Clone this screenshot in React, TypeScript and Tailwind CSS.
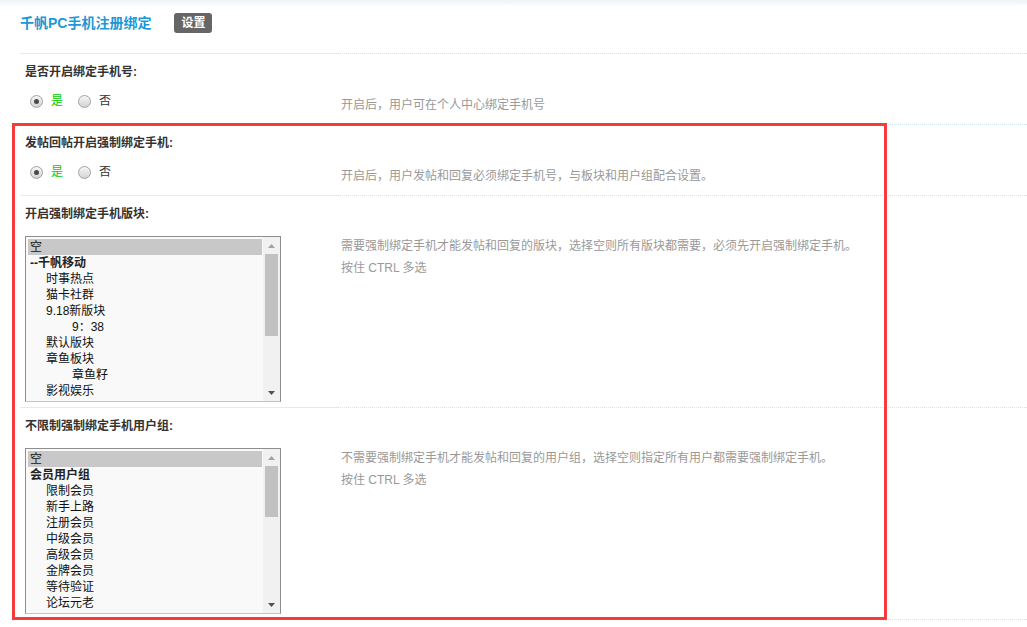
import React from 'react';

interface Opt {
  text: string;
  indent?: 0 | 1 | 2;
  bold?: boolean;
  selected?: boolean;
}

const forumOptions: Opt[] = [
  { text: '空', selected: true },
  { text: '--千帆移动', bold: true },
  { text: '时事热点', indent: 1 },
  { text: '猫卡社群', indent: 1 },
  { text: '9.18新版块', indent: 1 },
  { text: '9：38', indent: 2 },
  { text: '默认版块', indent: 1 },
  { text: '章鱼板块', indent: 1 },
  { text: '章鱼籽', indent: 2 },
  { text: '影视娱乐', indent: 1 },
];

const groupOptions: Opt[] = [
  { text: '空', selected: true },
  { text: '会员用户组', bold: true },
  { text: '限制会员', indent: 1 },
  { text: '新手上路', indent: 1 },
  { text: '注册会员', indent: 1 },
  { text: '中级会员', indent: 1 },
  { text: '高级会员', indent: 1 },
  { text: '金牌会员', indent: 1 },
  { text: '等待验证', indent: 1 },
  { text: '论坛元老', indent: 1 },
];

// row separator: solid under the form cell, dotted under the tips cell
function Line() {
  return (
    <div className="flex h-px">
      <div className="w-[317px] bg-[#e2eaf3]" />
      <div className="flex-1 border-t border-dotted border-[#cfe3f3]" />
    </div>
  );
}

function Header({ label }: { label: string }) {
  return (
    <div className="h-[30px] pl-[5px] pt-[11px] text-[12px] leading-[14px] font-bold text-[#333]">
      {label}
    </div>
  );
}

function Radio({ checked }: { checked?: boolean }) {
  return (
    <span className="flex h-[13px] w-[13px] items-center justify-center rounded-full border border-[#a2a2a2] bg-gradient-to-b from-[#f6f6f6] to-[#d4d4d4]">
      {checked && <span className="h-[5px] w-[5px] rounded-full bg-[#4a4a4a]" />}
    </span>
  );
}

function RadioRow({ tips }: { tips: string }) {
  return (
    <div className="flex h-[40px]">
      <div className="w-[317px] pl-[10px] pt-[10px]">
        <div className="flex h-[14px] items-center text-[12px] leading-[14px]">
          <Radio checked />
          <span className="ml-[8px] text-[#00cc00]">是</span>
          <span className="ml-[15px]">
            <Radio />
          </span>
          <span className="ml-[8px] text-[#333]">否</span>
        </div>
      </div>
      <div className="pl-[4px] pt-[13px] text-[12px] leading-[16px] text-[#999]">{tips}</div>
    </div>
  );
}

function ListBox({ options, thumb }: { options: Opt[]; thumb: number }) {
  return (
    <div className="flex h-[166px] w-[256px] border border-[#8e8e8e] border-b-[#c4c4c4] bg-[#f9f9f9]">
      <div className="flex-1 overflow-hidden pl-[2px] pr-[1px] pt-[2px]">
        {options.map((o, i) => (
          <div
            key={i}
            className={`h-[16px] whitespace-nowrap pl-[2px] text-[12px] leading-[16px] ${
              o.selected ? 'bg-[#c8c8c8] text-[#111]' : 'text-[#111]'
            } ${o.bold ? 'font-bold text-[#222]' : ''} ${
              o.indent === 1 ? 'pl-[18px]' : o.indent === 2 ? 'pl-[44px]' : ''
            }`}
          >
            {o.text}
          </div>
        ))}
      </div>
      <div className="flex w-[17px] flex-col bg-[#f1f1f1]">
        <div className="flex h-[17px] items-center justify-center">
          <svg width="7" height="4" viewBox="0 0 7 4">
            <path d="M0 4 L3.5 0 L7 4 Z" fill="#a3a3a3" />
          </svg>
        </div>
        <div className="flex-1 px-[2px]">
          <div className="w-full bg-[#c1c1c1]" style={{ height: thumb }} />
        </div>
        <div className="flex h-[17px] items-center justify-center">
          <svg width="7" height="4" viewBox="0 0 7 4">
            <path d="M0 0 L7 0 L3.5 4 Z" fill="#505050" />
          </svg>
        </div>
      </div>
    </div>
  );
}

function SelectRow({ options, thumb, tips }: { options: Opt[]; thumb: number; tips: string }) {
  return (
    <div className="flex">
      <div className="w-[317px] pl-[5px] pb-[5px] pt-[10px]">
        <ListBox options={options} thumb={thumb} />
      </div>
      <div className="pl-[4px] pt-[9px] text-[12px] leading-[22px] text-[#999]">
        <div>{tips}</div>
        <div>按住 CTRL 多选</div>
      </div>
    </div>
  );
}

export default function App() {
  return (
    <div
      className="relative h-[627px] w-full overflow-hidden bg-white"
      style={{ fontFamily: '"Liberation Sans", "Noto Sans CJK SC", sans-serif' }}
    >
      {/* page title */}
      <div className="h-[53px] bg-[linear-gradient(to_bottom,#eef3f9,#ffffff_7px)] pl-[20px] pt-[13px]">
        <div className="flex h-[20px] items-center">
          <h3 className="text-[14px] leading-[20px] font-bold text-[#1d98d6]">千帆PC手机注册绑定</h3>
          <span className="ml-[23px] flex h-[20px] items-center rounded-[3px] bg-[#666] px-[7px] text-[12px] font-bold text-white">
            设置
          </span>
        </div>
      </div>

      <div className="pl-[20px]">
        <Line />
        <Header label="是否开启绑定手机号:" />
        <RadioRow tips="开启后，用户可在个人中心绑定手机号" />
        <Line />
        <Header label="发帖回帖开启强制绑定手机:" />
        <RadioRow tips="开启后，用户发帖和回复必须绑定手机号，与板块和用户组配合设置。" />
        <Line />
        <Header label="开启强制绑定手机版块:" />
        <SelectRow
          options={forumOptions}
          thumb={82}
          tips="需要强制绑定手机才能发帖和回复的版块，选择空则所有版块都需要，必须先开启强制绑定手机。"
        />
        <Line />
        <Header label="不限制强制绑定手机用户组:" />
        <SelectRow
          options={groupOptions}
          thumb={51}
          tips="不需要强制绑定手机才能发帖和回复的用户组，选择空则指定所有用户都需要强制绑定手机。"
        />
        <Line />
      </div>

      {/* red highlight frame drawn over the page */}
      <div className="pointer-events-none absolute left-[12px] top-[123px] h-[497px] w-[875px] border-[3px] border-[#f63b3b]" />
    </div>
  );
}
